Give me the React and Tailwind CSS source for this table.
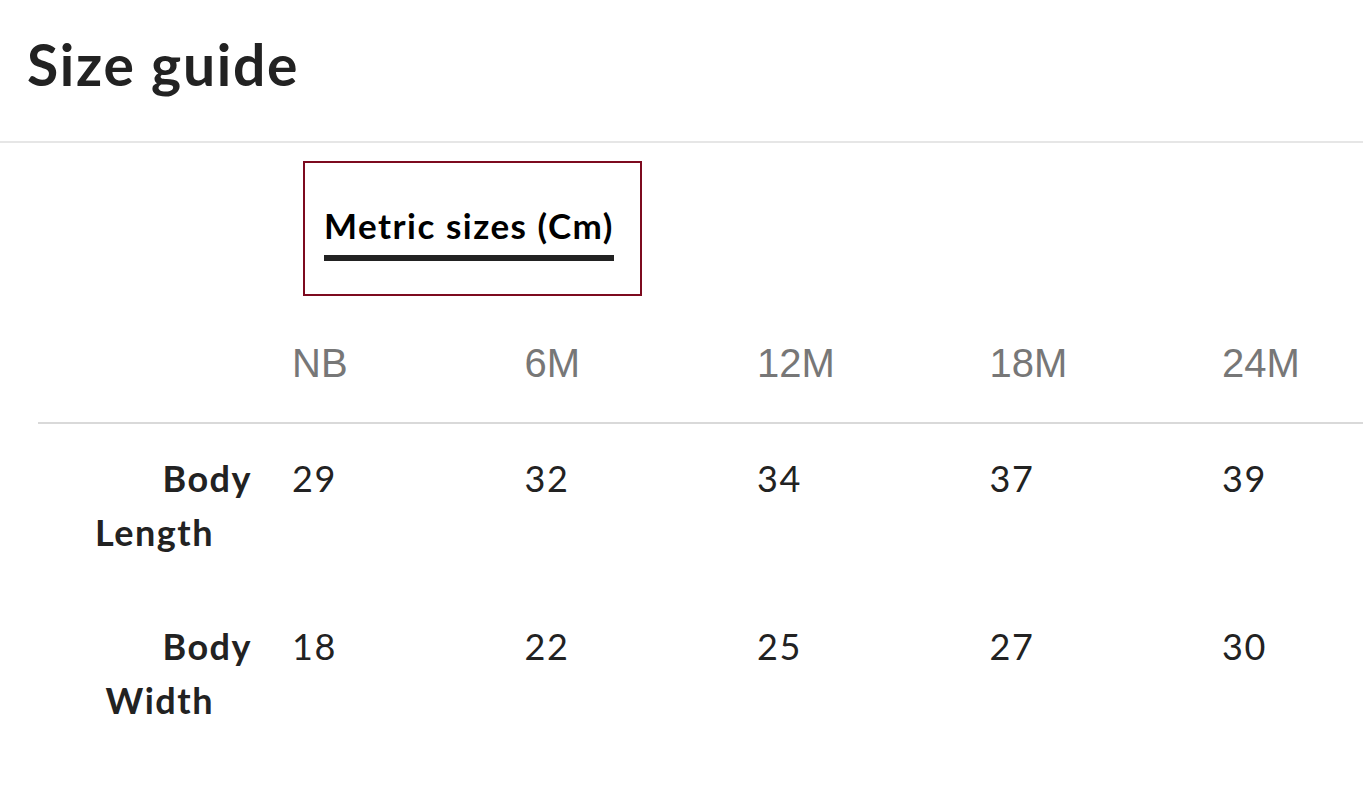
import React from 'react'

const sizes = ['NB', '6M', '12M', '18M', '24M']
const rows = [
  { a: 'Body', b: 'Length', values: ['29', '32', '34', '37', '39'] },
  { a: 'Body', b: 'Width', values: ['18', '22', '25', '27', '30'] },
]

export default function App() {
  return (
    <div className="w-[1363px] h-[785px] overflow-hidden bg-white font-['Lato',sans-serif] text-[#222]">
      {/* Header */}
      <div className="h-[143px] border-b-2 border-[#e6e6e6] pl-[27px] pt-[36px]">
        <h1 className="text-[57px] font-bold leading-none tracking-[1.7px]">Size guide</h1>
      </div>

      {/* Tab */}
      <div className="pl-[303px] pt-[18px]">
        <div className="w-[339px] h-[135px] border-2 border-[#7d0a1f] pl-[19px] pt-[45px]">
          <div className="inline-block">
            <div className="text-[35px] font-bold leading-none tracking-[1.5px] text-black">Metric sizes (Cm)</div>
            <div className="h-[6px] bg-[#222] mt-[12px]"></div>
          </div>
        </div>
      </div>

      {/* Table */}
      <div className="ml-[38px] mt-[42px]">
        <div className="flex h-[86px] pt-[5px] border-b-2 border-[#d9d9d9] font-['Liberation_Sans',sans-serif] text-[40px] leading-none text-[#777]">
          <div className="w-[254px] shrink-0"></div>
          {sizes.map((s) => (
            <div key={s} className="w-[232.5px] shrink-0">{s}</div>
          ))}
        </div>
        {rows.map((r, i) => (
          <div key={i} className="flex h-[168px] pt-[27px] text-[36px] leading-[54px] tracking-[1.5px]">
            <div className="w-[254px] shrink-0 font-bold text-right">
              <div className="pr-[40px]">{r.a}</div>
              <div className="pr-[78px]">{r.b}</div>
            </div>
            {r.values.map((v, j) => (
              <div key={j} className="w-[232.5px] shrink-0">{v}</div>
            ))}
          </div>
        ))}
      </div>
    </div>
  )
}
